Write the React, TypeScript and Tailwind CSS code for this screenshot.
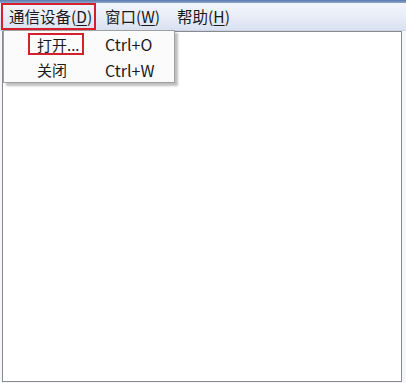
import React from "react";

const font = { fontFamily: '"Noto Sans CJK SC", "Noto Sans", sans-serif' };

function U({ c }: { c: string }) {
  return <span className="underline underline-offset-2">{c}</span>;
}

export default function App() {
  return (
    <div
      className="relative w-[406px] h-[383px] overflow-hidden bg-[#f4f6fa] flex flex-col text-[15px] text-[#1a1a1a]"
      style={font}
    >
      <div className="h-[3px] bg-gradient-to-b from-[#5a78ad] to-[#8ea6cf]" />
      <div className="h-[28px] flex items-stretch bg-gradient-to-b from-[#f3f5fb] via-[#e9edf7] to-[#d9e1f1] border-b border-[#c9d2e6]">
        <div className="ml-[1px] w-[95px] border-2 border-[#d3202a] flex items-center pl-[6px] leading-none text-[15.5px]">
          通信设备(<U c="D" />)
        </div>
        <div className="ml-[9px] flex items-center leading-none text-[15.5px]">
          窗口(<U c="W" />)
        </div>
        <div className="ml-[17px] flex items-center leading-none text-[15.5px]">
          帮助(<U c="H" />)
        </div>
      </div>
      <div className="flex-1 ml-[2px] mr-[4px] mb-[1px] border border-[#8a8a8a] bg-white" />

      <div className="absolute left-[3px] top-[30px] w-[172px] h-[53px] bg-[#fbfbfb] border border-[#a0a0a0] shadow-[3px_3px_2px_rgba(0,0,0,0.25)] flex flex-col">
        <div className="h-[26px] flex items-center">
          <div className="ml-[24px] w-[56px] h-[22px] border-2 border-[#d3202a] flex items-center pl-[7px] leading-none">
            打开...
          </div>
          <div className="ml-[21px] leading-none text-[16px]">Ctrl+O</div>
        </div>
        <div className="h-[25px] flex items-center">
          <div className="ml-[33px] w-[47px] leading-none">关闭</div>
          <div className="ml-[21px] leading-none text-[16px]">Ctrl+W</div>
        </div>
      </div>
    </div>
  );
}
